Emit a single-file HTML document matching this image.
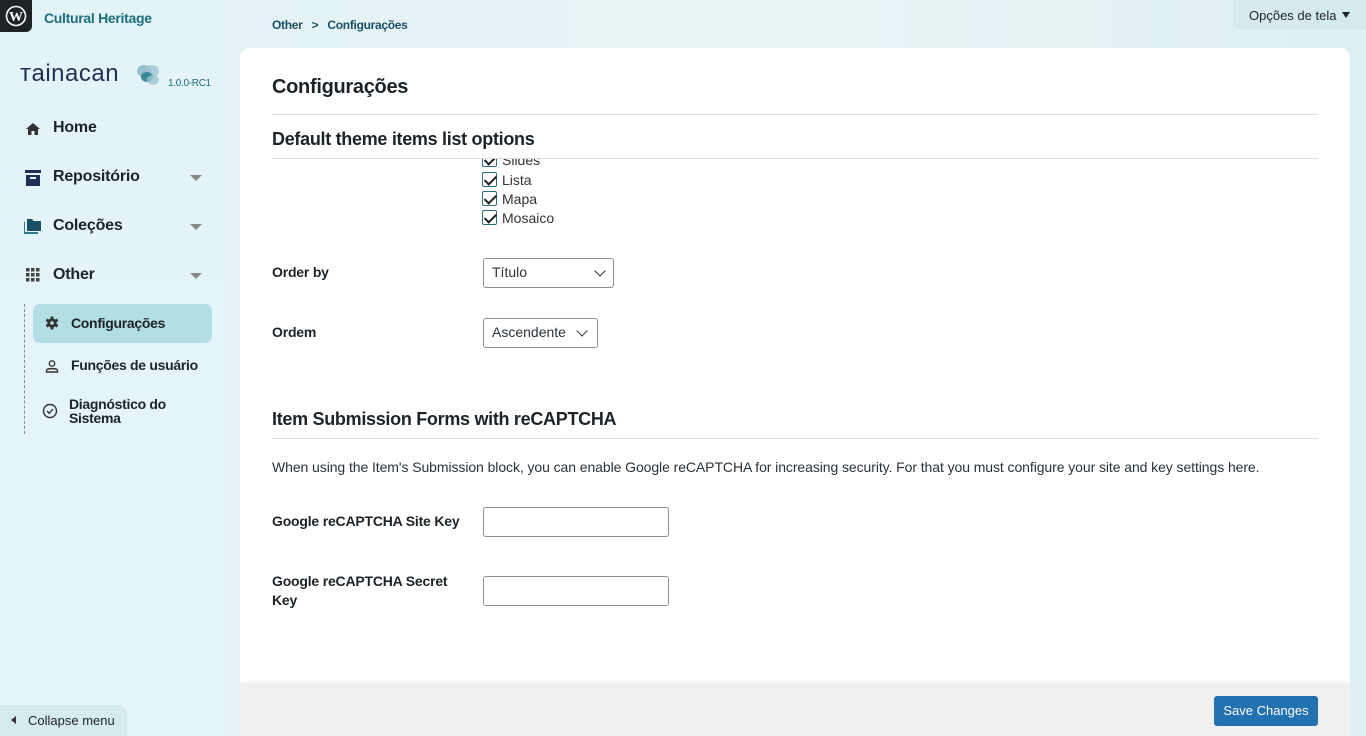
<!DOCTYPE html>
<html><head><meta charset="utf-8"><style>
*{box-sizing:border-box;margin:0;padding:0}
html,body{width:1366px;height:736px;overflow:hidden}
body{font-family:"Liberation Sans",sans-serif;color:#1d2327;background:linear-gradient(90deg,#e2f2f5,#e8f4f6 60%,#dfeff2);position:relative}
.abs{position:absolute}
.side{left:0;top:0;width:224px;height:736px;background:linear-gradient(180deg,#e3f3f7,#e4f4f8);}
.wp{left:0;top:0;width:32px;height:32px;background:#1d2327;border-bottom-right-radius:6px}
.nav{left:24px;font-size:16px;color:#1d2327;font-weight:bold;letter-spacing:-0.2px}
.caret{left:190px;width:0;height:0;border-left:6px solid transparent;border-right:6px solid transparent;border-top:6px solid #888}
.sub{font-size:14px;color:#1d2327;font-weight:bold;letter-spacing:-0.3px}
.card{left:240px;top:48px;width:1110px;height:688px;background:#fff;border-radius:10px 10px 0 0;overflow:hidden}
.lbl{font-size:14px;font-weight:bold;color:#1d2327;letter-spacing:-0.2px}
.cb{width:15px;height:15px;border:1px solid #2b6f7a;border-radius:2px;background:#fff}
.cb:after{content:"";position:absolute;left:4px;top:0px;width:5px;height:10px;border:solid #1d2327;border-width:0 2px 2px 0;transform:rotate(45deg)}
.ct{font-size:14px;color:#333}
.sel{border:1px solid #8c8f94;border-radius:3px;background:#fff;font-size:14px;color:#2c3338;padding:5px 8px}
.chev{width:8px;height:8px;border:solid #333;border-width:0 1.5px 1.5px 0;transform:rotate(45deg)}
.inp{border:1px solid #8c8f94;border-radius:3px;background:#fff;width:186px;height:30px}
</style></head><body>
<div class="abs side"></div>
<div class="abs wp"><svg width="32" height="32" viewBox="0 0 32 32"><circle cx="16" cy="16" r="9.5" fill="none" stroke="#fff" stroke-width="1.6"/><text x="16" y="21" font-size="14" font-weight="bold" font-family="Liberation Serif,serif" fill="#fff" text-anchor="middle">W</text></svg></div>
<div class="abs" style="left:44px;top:10px;font-size:14px;color:#1b6e7e;font-weight:bold;letter-spacing:-0.3px">Cultural Heritage</div>
<div class="abs" style="left:20px;top:60px;font-size:24px;color:#1f2f56;letter-spacing:0.5px;font-family:'Liberation Sans',sans-serif">тainacan</div>
<svg class="abs" style="left:135px;top:62px" width="26" height="26"><ellipse cx="9" cy="9" rx="7" ry="6" fill="#7fb2c0" opacity=".8"/><ellipse cx="17" cy="9" rx="7" ry="6" fill="#9cc6d0" opacity=".8"/><ellipse cx="12" cy="15" rx="6" ry="5" fill="#2d7f92" opacity=".9"/><ellipse cx="18" cy="18" rx="6" ry="5" fill="#9cc6d0" opacity=".8"/></svg>
<div class="abs" style="left:168px;top:78px;font-size:10px;color:#1b6e7e;letter-spacing:-0.3px">1.0.0-RC1</div>

<svg class="abs" style="left:25px;top:121px" width="16" height="16" viewBox="0 0 16 16"><path d="M8 2 L1 8 H3 V14 H6.5 V10 H9.5 V14 H13 V8 H15Z" fill="#333"/></svg>
<div class="abs nav" style="left:53px;top:119px">Home</div>
<svg class="abs" style="left:24px;top:169px" width="18" height="18" viewBox="0 0 18 18"><rect x="1" y="1" width="16" height="3" fill="#1f2f56"/><rect x="2" y="6" width="14" height="11" fill="#1f2f56"/><rect x="6" y="8" width="6" height="2" fill="#e4f4f8"/></svg>
<div class="abs nav" style="left:53px;top:168px">Repositório</div>
<div class="abs caret" style="top:175px"></div>
<svg class="abs" style="left:24px;top:218px" width="18" height="16" viewBox="0 0 18 16"><path d="M0 4 V15 H14" fill="none" stroke="#2b7a8c" stroke-width="2"/><path d="M3 1 H8 L9.5 3 H17 V13 H3Z" fill="#1b4f66"/></svg>
<div class="abs nav" style="left:53px;top:217px">Coleções</div>
<div class="abs caret" style="top:224px"></div>
<svg class="abs" style="left:26px;top:268px" width="14" height="14"><g fill="#444"><rect x="0" y="0" width="3.5" height="3.5"/><rect x="5" y="0" width="3.5" height="3.5"/><rect x="10" y="0" width="3.5" height="3.5"/><rect x="0" y="5" width="3.5" height="3.5"/><rect x="5" y="5" width="3.5" height="3.5"/><rect x="10" y="5" width="3.5" height="3.5"/><rect x="0" y="10" width="3.5" height="3.5"/><rect x="5" y="10" width="3.5" height="3.5"/><rect x="10" y="10" width="3.5" height="3.5"/></g></svg>
<div class="abs nav" style="left:53px;top:266px">Other</div>
<div class="abs caret" style="top:273px"></div>
<div class="abs" style="left:24px;top:304px;height:130px;border-left:1px dashed #888"></div>
<div class="abs" style="left:33px;top:304px;width:179px;height:39px;background:#b3dee4;border-radius:7px"></div>
<svg class="abs" style="left:45px;top:316px" width="14" height="14" viewBox="0 0 14 14"><g fill="#333"><rect x="5.5" y="0.5" width="3" height="13" rx="0.8"/><rect x="5.5" y="0.5" width="3" height="13" rx="0.8" transform="rotate(60 7 7)"/><rect x="5.5" y="0.5" width="3" height="13" rx="0.8" transform="rotate(120 7 7)"/><circle cx="7" cy="7" r="4.6"/></g><circle cx="7" cy="7" r="1.8" fill="#b3dee4"/></svg>
<div class="abs sub" style="left:71px;top:315px">Configurações</div>
<svg class="abs" style="left:45px;top:359px" width="14" height="14" viewBox="0 0 14 14"><circle cx="7" cy="4.5" r="2.7" fill="none" stroke="#333" stroke-width="1.4"/><path d="M1.5 13 V11.5 C1.5 9 12.5 9 12.5 11.5 V13Z" fill="none" stroke="#333" stroke-width="1.4"/></svg>
<div class="abs sub" style="left:71px;top:357px">Funções de usuário</div>
<svg class="abs" style="left:42px;top:403px" width="16" height="16" viewBox="0 0 16 16"><circle cx="8" cy="8" r="6.5" fill="none" stroke="#333" stroke-width="1.4"/><path d="M5 8 L7.2 10.2 L11 6.2" fill="none" stroke="#333" stroke-width="1.4"/></svg>
<div class="abs sub" style="left:69px;top:397px;line-height:14px">Diagnóstico do<br>Sistema</div>
<div class="abs" style="left:0;top:705px;width:127px;height:31px;background:#d6ebee;border-top-right-radius:8px"></div>
<div class="abs" style="left:11px;top:716px;width:0;height:0;border-top:4px solid transparent;border-bottom:4px solid transparent;border-right:5px solid #333"></div>
<div class="abs" style="left:28px;top:713px;font-size:13px;color:#1d2327">Collapse menu</div>

<div class="abs" style="left:272px;top:18px;font-size:12px;color:#1b4f66;font-weight:bold;letter-spacing:-0.3px">Other &nbsp;&nbsp;&gt;&nbsp;&nbsp; Configurações</div>
<div class="abs" style="left:1233px;top:0;width:133px;height:30px;background:#d6eaed;border-bottom-left-radius:8px"></div>
<div class="abs" style="left:1249px;top:8px;font-size:13px;color:#1d2327">Opções de tela</div>
<div class="abs" style="left:1342px;top:12px;width:0;height:0;border-left:4px solid transparent;border-right:4px solid transparent;border-top:6px solid #1d2327"></div>

<div class="abs card">
  <div class="abs" style="left:32px;top:28px;font-size:20px;color:#1d2327;font-weight:bold;letter-spacing:-0.3px">Configurações</div>
  <div class="abs" style="left:32px;top:66px;width:1046px;border-top:1px solid #dcdcde"></div>
  <div class="abs" style="left:0;top:110px;width:1110px;height:300px;overflow:hidden">
    <div class="abs cb" style="left:242px;top:-6px"></div><div class="abs ct" style="left:262px;top:-6px">Slides</div>
  </div>
  <div class="abs" style="left:32px;top:81px;font-size:18px;font-weight:bold;color:#1d2327;letter-spacing:-0.3px">Default theme items list options</div>
  <div class="abs" style="left:32px;top:110px;width:1046px;border-top:1px solid #dcdcde"></div>
  <div class="abs cb" style="left:242px;top:124px"></div><div class="abs ct" style="left:262px;top:124px">Lista</div>
  <div class="abs cb" style="left:242px;top:143px"></div><div class="abs ct" style="left:262px;top:143px">Mapa</div>
  <div class="abs cb" style="left:242px;top:162px"></div><div class="abs ct" style="left:262px;top:162px">Mosaico</div>
  <div class="abs lbl" style="left:32px;top:216px">Order by</div>
  <div class="abs sel" style="left:243px;top:210px;width:131px;height:30px">Título</div>
  <div class="abs chev" style="left:356px;top:219px"></div>
  <div class="abs lbl" style="left:32px;top:276px">Ordem</div>
  <div class="abs sel" style="left:243px;top:270px;width:115px;height:30px">Ascendente</div>
  <div class="abs chev" style="left:338px;top:279px"></div>
  <div class="abs" style="left:32px;top:361px;font-size:18px;font-weight:bold;color:#1d2327;letter-spacing:-0.3px">Item Submission Forms with reCAPTCHA</div>
  <div class="abs" style="left:32px;top:390px;width:1046px;border-top:1px solid #dcdcde"></div>
  <div class="abs" style="left:32px;top:411px;font-size:14px;color:#2c3338;letter-spacing:-0.08px">When using the Item's Submission block, you can enable Google reCAPTCHA for increasing security. For that you must configure your site and key settings here.</div>
  <div class="abs lbl" style="left:32px;top:465px">Google reCAPTCHA Site Key</div>
  <div class="abs inp" style="left:243px;top:459px"></div>
  <div class="abs lbl" style="left:32px;top:524px;line-height:19px">Google reCAPTCHA Secret<br>Key</div>
  <div class="abs inp" style="left:243px;top:528px"></div>
  <div class="abs" style="left:0;top:635px;width:1110px;height:70px;background:#f0f0f1;box-shadow:0 -2px 4px rgba(0,0,0,.04)"></div>
  <div class="abs" style="left:974px;top:648px;width:104px;height:30px;background:#2271b1;border-radius:3px;color:#fff;font-size:13px;text-align:center;line-height:30px">Save Changes</div>
</div>
</body></html>
